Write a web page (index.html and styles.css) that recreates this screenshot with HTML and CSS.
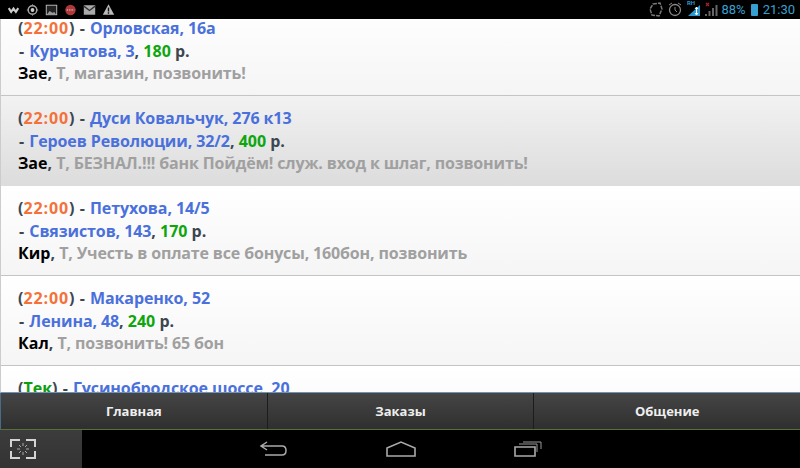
FILE: index.html
```html
<!DOCTYPE html>
<html lang="en">
<head>
    <meta charset="UTF-8">
    <meta name="viewport" content="width=device-width, initial-scale=1.0">
    <title>Заказы</title>
    <link rel="stylesheet" href="styles.css">
</head>
<body>
    <div class="status-bar">
        <div class="status-left">
            <svg width="19" height="19" viewBox="0 0 20 19"><path d="M5 8l2.500 4L10 8.500l2.500 3.500L15 8" fill="none" stroke="#ccc" stroke-width="2.200"/></svg>
            <svg width="19" height="19" viewBox="0 0 20 19"><circle cx="10" cy="10" r="4.500" fill="none" stroke="#aaa" stroke-width="1.500"/><circle cx="10" cy="10" r="2" fill="#ccc"/><path d="M10 4v2M10 14v2M4 10h2M14 10h2" stroke="#999"/></svg>
            <svg width="19" height="19" viewBox="0 0 20 19"><rect x="4.500" y="5" width="11" height="10" fill="#222" stroke="#bbb"/><path d="M5 15l3-4 3 2 2-1 2 3z" fill="#999"/></svg>
            <svg width="19" height="19" viewBox="0 0 20 19"><circle cx="10" cy="10" r="5.500" fill="#b03838"/><path d="M6 10h8" stroke="#ddd" stroke-dasharray="1.500 1"/></svg>
            <svg width="19" height="19" viewBox="0 0 20 19"><rect x="4" y="5" width="12" height="10" fill="#aaa"/><path d="M4 6l6 4.500L16 6" fill="none" stroke="#333" stroke-width="1.500"/></svg>
            <svg width="19" height="19" viewBox="0 0 20 19"><path d="M10 4l6 11H4z" fill="#bbb"/><path d="M10 7.500v4M10 12.500v1.500" stroke="#111" stroke-width="1.500"/></svg>
        </div>
        <div class="status-right">
            <svg width="16" height="19" viewBox="0 0 16 19"><path d="M5 4l7-1 2 6-3 7-7-1-2-6z" fill="none" stroke="#777" stroke-width="1.500" stroke-dasharray="4 1"/></svg>
            <svg class="alarm" width="16" height="19" viewBox="0 0 16 19"><circle cx="8" cy="10" r="5.500" fill="none" stroke="#888" stroke-width="1.300"/><path d="M8 7v3l2 2M2 5l3-2M14 5l-3-2" fill="none" stroke="#888"/></svg>
            <svg width="14" height="19" viewBox="0 0 14 19"><path d="M1 16L13 5v11z" fill="#2c9ad0"/><path d="M9.500 7v8M8 9l1.500-2L11 9M8 13l1.500 2 1.500-2" fill="none" stroke="#fff"/><text x="0" y="5" class="net-label">RH</text></svg>
            <svg width="14" height="19" viewBox="0 0 14 19"><path d="M1 16h2v-2H1zM4.500 16h2v-5h-2zM8 16h2V8H8zM11.500 16h2V5h-2z" fill="#666"/><path d="M2 3l3 3M5 3L2 6" stroke="#a22" stroke-width="1.200"/></svg>
            <span class="battery-text">88%</span>
            <span class="battery"></span>
            <span class="clock">21:30</span>
        </div>
    </div>

    <div class="list">
        <div class="row row-first">
            <p>(<span class="time">22:00</span>) <span class="dash">-</span> <span class="addr">Орловская, 16а</span></p>
            <p><span class="dash">-</span> <span class="addr">Курчатова, 3</span>, <span class="price">180</span> р.</p>
            <p><span class="who">Зае</span>, <span class="note">Т, магазин, позвонить!</span></p>
        </div>
        <div class="row row-selected">
            <p>(<span class="time">22:00</span>) <span class="dash">-</span> <span class="addr">Дуси Ковальчук, 276 к13</span></p>
            <p><span class="dash">-</span> <span class="addr">Героев Революции, 32/2</span>, <span class="price">400</span> р.</p>
            <p><span class="who">Зае</span>, <span class="note">Т, БЕЗНАЛ.!!! банк Пойдём! служ. вход к шлаг, позвонить!</span></p>
        </div>
        <div class="row">
            <p>(<span class="time">22:00</span>) <span class="dash">-</span> <span class="addr">Петухова, 14/5</span></p>
            <p><span class="dash">-</span> <span class="addr">Связистов, 143</span>, <span class="price">170</span> р.</p>
            <p><span class="who">Кир</span>, <span class="note">Т, Учесть в оплате все бонусы, 160бон, позвонить</span></p>
        </div>
        <div class="row">
            <p>(<span class="time">22:00</span>) <span class="dash">-</span> <span class="addr">Макаренко, 52</span></p>
            <p><span class="dash">-</span> <span class="addr">Ленина, 48</span>, <span class="price">240</span> р.</p>
            <p><span class="who">Кал</span>, <span class="note">Т, позвонить! 65 бон</span></p>
        </div>
        <div class="row">
            <p>(<span class="now">Тек</span>) <span class="dash">-</span> <span class="addr">Гусинобродское шоссе, 20</span></p>
        </div>
    </div>

    <div class="tabs">
        <a href="#" class="tab">Главная</a>
        <a href="#" class="tab">Заказы</a>
        <a href="#" class="tab">Общение</a>
    </div>

    <div class="nav-bar">
        <div class="nav-side">
            <svg width="26" height="20" viewBox="0 0 26 20"><path d="M1 8V1h9M16 1h9v7M1 12v7h9M16 19h9v-7" fill="none" stroke="#d4d4d4" stroke-width="2"/><path d="M13 4v3M13 13v3M7 10h3M16 10h3M9 6l2 2M17 6l-2 2M9 14l2-2M17 14l-2-2" stroke="#aaa"/></svg>
        </div>
        <div class="nav-buttons">
            <svg width="28" height="16" viewBox="0 0 28 16"><path d="M7 1L1 5l6 4M1 5h21q4 0 4 4.500T22 14H5" fill="none" stroke="#aaa" stroke-width="1.500"/></svg>
            <svg width="30" height="16" viewBox="0 0 30 16"><path d="M1 7l14-6 14 6v8H1z" fill="none" stroke="#aaa" stroke-width="1.600"/></svg>
            <svg width="28" height="16" viewBox="0 0 28 16"><path d="M1 6h20v9H1z" fill="none" stroke="#aaa" stroke-width="1.600"/><path d="M5 3h18v8M9 1h18v7" fill="none" stroke="#999"/></svg>
        </div>
    </div>
</body>
</html>
```

FILE: styles.css
```css
* {
    margin: 0;
    padding: 0;
    box-sizing: border-box;
}

html, body {
    width: 800px;
    height: 468px;
    overflow: hidden;
}

body {
    display: flex;
    flex-direction: column;
    font-family: "Open Sans", Roboto, Arial, sans-serif;
    background: #000;
}

/* Status bar */
.status-bar {
    height: 19px;
    flex: none;
    background: #000;
    display: flex;
    justify-content: space-between;
    align-items: center;
    padding: 0 5px 0 4px;
}

.status-left {
    display: flex;
    align-items: center;
}

.status-left svg,
.status-right svg {
    display: block;
}

.status-right {
    display: flex;
    align-items: center;
    gap: 3px;
    color: #38a0d0;
    font-family: Roboto, Arial, sans-serif;
    font-size: 13px;
}

.net-label {
    font-size: 6px;
    font-weight: 700;
    fill: #2c9ad0;
}

.alarm {
    margin-right: 1px;
}

.battery {
    width: 7px;
    height: 12px;
    margin-left: 2px;
    background: #38a0d0;
    border-radius: 1px;
}

.clock {
    margin-left: 2px;
}

/* Orders list */
.list {
    height: 374px;
    flex: none;
    overflow: hidden;
    background: #fff;
    border-left: 1px solid #ccc;
    border-bottom: 1px solid #6f93b8;
}

.row {
    height: 90px;
    padding: 11px 0 0 17px;
    border-bottom: 1px solid #c4c4c4;
    background: linear-gradient(#fff, #f5f5f5);
    color: #3c4650;
    font-size: 16px;
    font-weight: 700;
    line-height: 22.500px;
    white-space: nowrap;
}

.row-first {
    margin-top: -13px;
}

.row-selected {
    background: linear-gradient(#f2f2f2, #dcdcdc);
    border-bottom: none;
}

.dash {
    margin: 0 1px;
}

.time {
    color: #f4723a;
    letter-spacing: 0.9px;
}

.now {
    color: #0f9d10;
}

.addr {
    color: #4a70dc;
    letter-spacing: -0.1px;
}

.price {
    color: #0ea60e;
}

.who {
    color: #000;
}

.note {
    color: #a0a0a0;
    letter-spacing: -0.15px;
}

/* Bottom tabs */
.tabs {
    height: 37px;
    flex: none;
    display: flex;
    background: linear-gradient(#454545, #2f2f2f);
    border-left: 1px solid #4a6a8a;
    border-bottom: 1px solid #55713c;
}

.tab {
    flex: 1;
    display: flex;
    align-items: center;
    justify-content: center;
    color: #eee;
    font-size: 13px;
    font-weight: 700;
    text-decoration: none;
    border-right: 1px solid #1c1c1c;
}

.tab:last-child {
    border-right: none;
}

/* System nav */
.nav-bar {
    flex: 1;
    display: flex;
    background: #000;
}

.nav-side {
    width: 82px;
    padding-left: 10px;
    background: linear-gradient(#3c3c3c, #333);
    display: flex;
    align-items: center;
}

.nav-buttons {
    flex: 1;
    display: flex;
    align-items: center;
    justify-content: center;
    gap: 98px;
    padding-right: 80px;
}
```
